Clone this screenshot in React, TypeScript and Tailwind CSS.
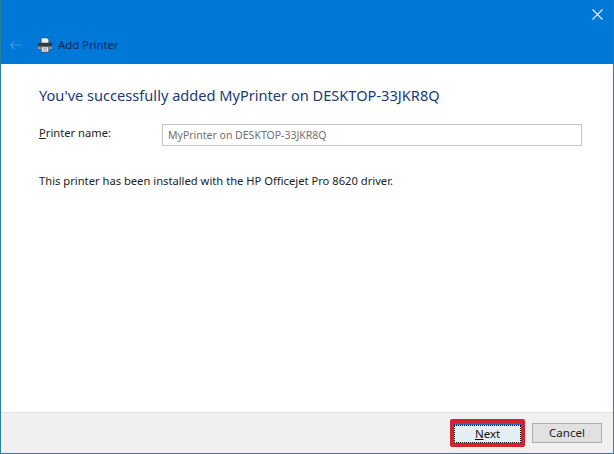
export default function App() {
  const font = { fontFamily: '"Noto Sans", "Open Sans", sans-serif' };
  return (
    <div style={font} className="w-[614px] h-[454px] flex flex-col bg-white border-l border-r border-b border-[#2b7f9e] overflow-hidden">
      <header className="h-[64px] bg-[#0078d7] flex flex-col shrink-0">
        <div className="h-[35px] flex justify-end items-center pr-[10px] pb-[6px]">
          <svg width="11" height="11" viewBox="0 0 11 11" fill="none" stroke="#e8f4ff" strokeWidth="1.1">
            <path d="M0.5 0.5L10.5 10.5M10.5 0.5L0.5 10.5" />
          </svg>
        </div>
        <div className="flex items-center h-[20px] pl-[8px]">
          <svg width="14" height="10" viewBox="0 0 14 10" fill="none" stroke="#3f97dd" strokeWidth="1.2">
            <path d="M13 5H1.5M5.5 1L1.5 5L5.5 9" />
          </svg>
          <svg className="ml-[14px]" width="16" height="16" viewBox="0 0 17 17">
            <path d="M4.5 1h6l2 2v4h-8z" fill="#eef1f4" stroke="#4a5561" strokeWidth="0.7" />
            <path d="M1 7.5Q1 6 2.5 6h12Q16 6 16 7.5V13h-15z" fill="#2f3a46" />
            <path d="M1 10h15v3h-15z" fill="#8e98a3" />
            <path d="M4.5 10.5h8V16h-8z" fill="#ffffff" stroke="#3f4a55" strokeWidth="0.8" />
            <path d="M6 12.5h5M6 14h5" stroke="#5a6570" strokeWidth="0.7" />
          </svg>
          <span className="ml-[5px] text-[11.3px] leading-none text-[#0a2350]">Add Printer</span>
        </div>
      </header>

      <main className="flex-1 pl-[38px] pr-[31px] pt-[21px]">
        <h1 className="text-[14.6px] leading-[20px] text-[#1a3a78] whitespace-nowrap">
          You've successfully added MyPrinter on DESKTOP-33JKR8Q
        </h1>
        <div className="flex items-center mt-[19px] h-[22px]">
          <label className="w-[123px] text-[11.2px] text-[#222222] -mt-[3px]">
            <span className="underline">P</span>rinter name:
          </label>
          <div className="flex-1 h-[22px] border border-[#c4c4c4] flex items-center pl-[5px] pt-[2px] text-[10.5px] text-[#707070]">
            MyPrinter on DESKTOP-33JKR8Q
          </div>
        </div>
        <p className="mt-[27px] text-[11.2px] leading-[16px] text-[#222222] whitespace-nowrap">
          This printer has been installed with the HP Officejet Pro 8620 driver.
        </p>
      </main>

      <footer className="h-[41px] shrink-0 bg-[#f0f0f0] border-t border-[#dfdfdf] flex items-center justify-end pr-[11px] gap-[7px]">
        <div className="w-[75px] h-[28px] border-[4px] border-[#d2232f] rounded-[2px] bg-[#e1e1e1]">
          <button className="w-full h-full border-t-2 border-t-[#1c6fc4] text-[11.5px] text-[#111111] bg-[#e5eef5] flex items-center justify-center">
            <span className="w-full h-full flex items-center justify-center border border-dotted border-black">
              <span><span className="underline">N</span>ext</span>
            </span>
          </button>
        </div>
        <button className="w-[70px] h-[20px] border border-[#adadad] bg-[#e1e1e1] text-[11.5px] text-[#222222]">
          Cancel
        </button>
      </footer>
    </div>
  );
}
